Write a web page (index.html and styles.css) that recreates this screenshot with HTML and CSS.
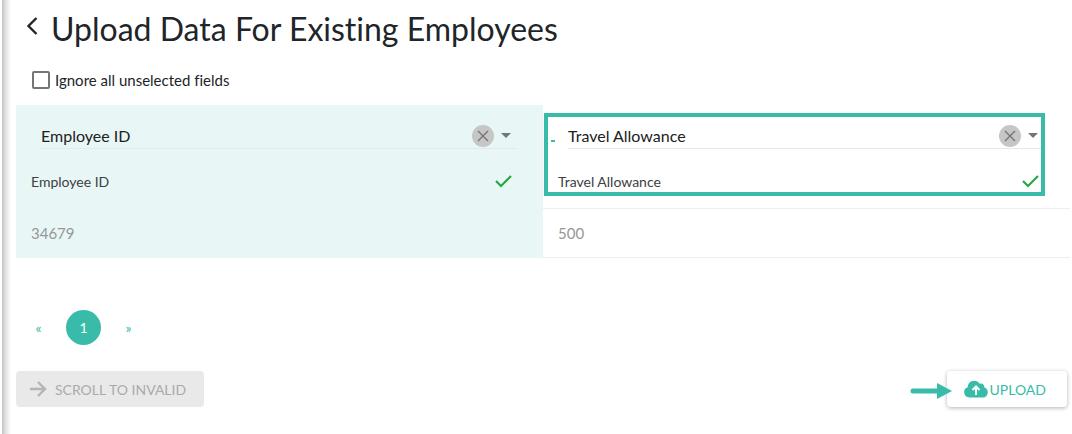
FILE: index.html
```html
<!DOCTYPE html>
<html lang="en">
<head>
    <meta charset="UTF-8">
    <meta name="viewport" content="width=device-width, initial-scale=1.0">
    <title>Upload Data For Existing Employees</title>
    <link rel="stylesheet" href="styles.css">
</head>
<body>
    <main class="page">
        <header class="page-header">
            <button class="back" type="button" aria-label="Back">
                <svg width="12" height="20" viewBox="0 0 12 20"><path d="M10.500 2 2.500 10l8 8"/></svg>
            </button>
            <h1>Upload Data For Existing Employees</h1>
        </header>

        <label class="ignore"><input type="checkbox"> Ignore all unselected fields</label>

        <table class="mapping">
            <thead>
                <tr>
                    <th class="selected">
                        <div class="field">
                            <select aria-label="Field for column 1">
                                <option>Employee ID</option>
                            </select>
                            <button class="clear" type="button" aria-label="Clear">
                                <svg width="12" height="12" viewBox="0 0 12 12"><path d="M1 1l10 10M11 1 1 11"/></svg>
                            </button>
                            <svg class="caret" width="10" height="5" viewBox="0 0 10 5"><path d="M0 0h10L5 5z"/></svg>
                        </div>
                        <div class="source">
                            <span>Employee ID</span>
                            <svg class="check" width="18" height="14" viewBox="0 0 18 14"><path d="M1 6l5 5L16 1"/></svg>
                        </div>
                    </th>
                    <th>
                        <div class="highlight"></div>
                        <div class="field">
                            <select aria-label="Field for column 2">
                                <option>Travel Allowance</option>
                            </select>
                            <button class="clear" type="button" aria-label="Clear">
                                <svg width="12" height="12" viewBox="0 0 12 12"><path d="M1 1l10 10M11 1 1 11"/></svg>
                            </button>
                            <svg class="caret" width="10" height="5" viewBox="0 0 10 5"><path d="M0 0h10L5 5z"/></svg>
                        </div>
                        <div class="source">
                            <span>Travel Allowance</span>
                            <svg class="check" width="18" height="14" viewBox="0 0 18 14"><path d="M1 6l5 5L16 1"/></svg>
                        </div>
                    </th>
                </tr>
            </thead>
            <tbody>
                <tr>
                    <td class="selected">34679</td>
                    <td>500</td>
                </tr>
            </tbody>
        </table>

        <nav class="pagination" aria-label="Pages">
            <a href="#" aria-label="Previous">«</a>
            <a href="#" class="current" aria-current="page">1</a>
            <a href="#" aria-label="Next">»</a>
        </nav>

        <footer class="actions">
            <button class="btn btn-disabled" type="button" disabled>
                <svg class="arrow" width="18" height="16" viewBox="0 0 18 16"><path d="M1 8h15M9 1l7 7-7 7"/></svg>
                SCROLL TO INVALID
            </button>
            <div class="upload">
                <svg class="pointer" width="42" height="16" viewBox="0 0 42 16"><path d="M3 8h26" stroke="#38bca9" stroke-width="5" stroke-linecap="round"/><path d="M27 0l15 8-15 8z" fill="#38bca9"/></svg>
                <button class="btn btn-upload" type="button">
                    <svg width="24" height="18" viewBox="0 0 24 18">
                        <path d="M5.500 17.500A5.300 5.300 0 0 1 3.700 7.200C3.700 3.500 6.700.700 10 .700c2.500 0 4.500 1.200 5.600 3.100 2.600-.9 5 .8 4.700 3.800 2 .5 3.500 2.300 3.500 4.600 0 3-2.300 5.300-5.100 5.300z" fill="#38bca9"/>
                        <path d="M12 15V7M8.500 10 12 6.500l3.500 3.500" fill="none" stroke="#fff" stroke-width="2"/>
                    </svg>
                    UPLOAD
                </button>
            </div>
        </footer>
    </main>
</body>
</html>
```
FILE: styles.css
```css
* {
    box-sizing: border-box;
}
body {
    margin: 0;
    background: #fff;
    color: #212529;
    font-family: Lato, "Noto Sans", sans-serif;
    font-size: 15px;
    font-variant-ligatures: none;
}
button, select, input {
    font-family: inherit;
}
.page {
    min-height: 100vh;
    margin-left: 2px;
    padding: 9px 2px 24px 14px;
    background: linear-gradient(to right, #c4c4c4, #e4e4e4 4px, #fff 9px);
}

/* Heading */
.page-header {
    display: flex;
    align-items: center;
    gap: 13px;
    padding-left: 10px;
}
.back {
    display: flex;
    padding: 0 0 6px;
    border: none;
    background: none;
    cursor: pointer;
}
.back svg {
    fill: none;
    stroke: #212529;
    stroke-width: 2.4;
}
h1 {
    margin: 0;
    font-size: 32px;
    font-weight: 400;
    line-height: 40px;
}
.ignore {
    display: flex;
    align-items: center;
    gap: 5px;
    margin: 19px 0 13px;
    padding-left: 16px;
    line-height: 24px;
}
.ignore input {
    appearance: none;
    width: 18px;
    height: 18px;
    margin: 0;
    border: 2px solid #757575;
    border-radius: 2px;
}

/* Column mapping */
.mapping {
    width: 100%;
    table-layout: fixed;
    border-collapse: collapse;
}
.mapping th {
    position: relative;
    padding: 18px 25px 14px;
    font-weight: 400;
    text-align: left;
    border-bottom: 1px solid #eceff0;
}
.mapping td {
    height: 49px;
    padding: 0 15px;
    color: #979797;
    border-bottom: 1px solid #eceff0;
}
.mapping .selected {
    background: #e9f6f6;
    border-bottom-color: #eef3f3;
}
.field {
    display: flex;
    align-items: center;
    border-bottom: 1px solid #e6e8ec;
}
.field select {
    flex: 1;
    height: 25px;
    padding: 0;
    border: none;
    background: none;
    appearance: none;
    color: #212121;
    font-size: 16px;
}
.clear {
    display: flex;
    align-items: center;
    justify-content: center;
    width: 22px;
    height: 22px;
    margin-right: 7px;
    padding: 0;
    border: none;
    border-radius: 50%;
    background: #c6c6c6;
    cursor: pointer;
}
.clear svg {
    fill: none;
    stroke: #757575;
    stroke-width: 1.4;
}
.caret {
    margin-right: 7px;
    fill: #757575;
}
.source {
    display: flex;
    align-items: center;
    justify-content: space-between;
    margin: 21px 5px 0 -10px;
    line-height: 24px;
    font-size: 14px;
    color: #3c4043;
}
.check {
    fill: none;
    stroke: #28a745;
    stroke-width: 2.2;
}
.highlight {
    position: absolute;
    top: 8px;
    left: 1px;
    right: 25px;
    height: 83px;
    border: 4px solid #38bca9;
    pointer-events: none;
}
.highlight::before {
    content: "";
    position: absolute;
    top: 23px;
    left: 3px;
    width: 4px;
    height: 2px;
    background: #38bca9;
}

/* Pages */
.pagination {
    display: flex;
    align-items: center;
    gap: 10px;
    margin: 52px 0 26px 5px;
}
.pagination a {
    width: 35px;
    border-radius: 50%;
    line-height: 35px;
    text-align: center;
    text-decoration: none;
    color: #38bca9;
    font-size: 14px;
}
.pagination .current {
    background: #38bca9;
    color: #fff;
}

/* Buttons */
.actions {
    display: flex;
    justify-content: space-between;
    padding-right: 3px;
}
.btn {
    display: flex;
    align-items: center;
    height: 36px;
    border: none;
    border-radius: 4px;
    font-size: 14px;
    font-weight: 400;
}
.btn-disabled {
    gap: 8px;
    padding: 0 18px 0 13px;
    background: #e9e9e9;
    color: #ababab;
}
.arrow {
    fill: none;
    stroke: #b5b5b5;
    stroke-width: 2.4;
}
.upload {
    display: flex;
    align-items: center;
}
.pointer {
    position: relative;
    z-index: 1;
    margin-right: -5px;
    margin-top: 4px;
}
.btn-upload {
    gap: 2px;
    padding: 0 21px 0 17px;
    background: #fff;
    color: #38bca9;
    box-shadow: 0 1px 4px rgba(0, 0, 0, 0.3);
    cursor: pointer;
}
```
